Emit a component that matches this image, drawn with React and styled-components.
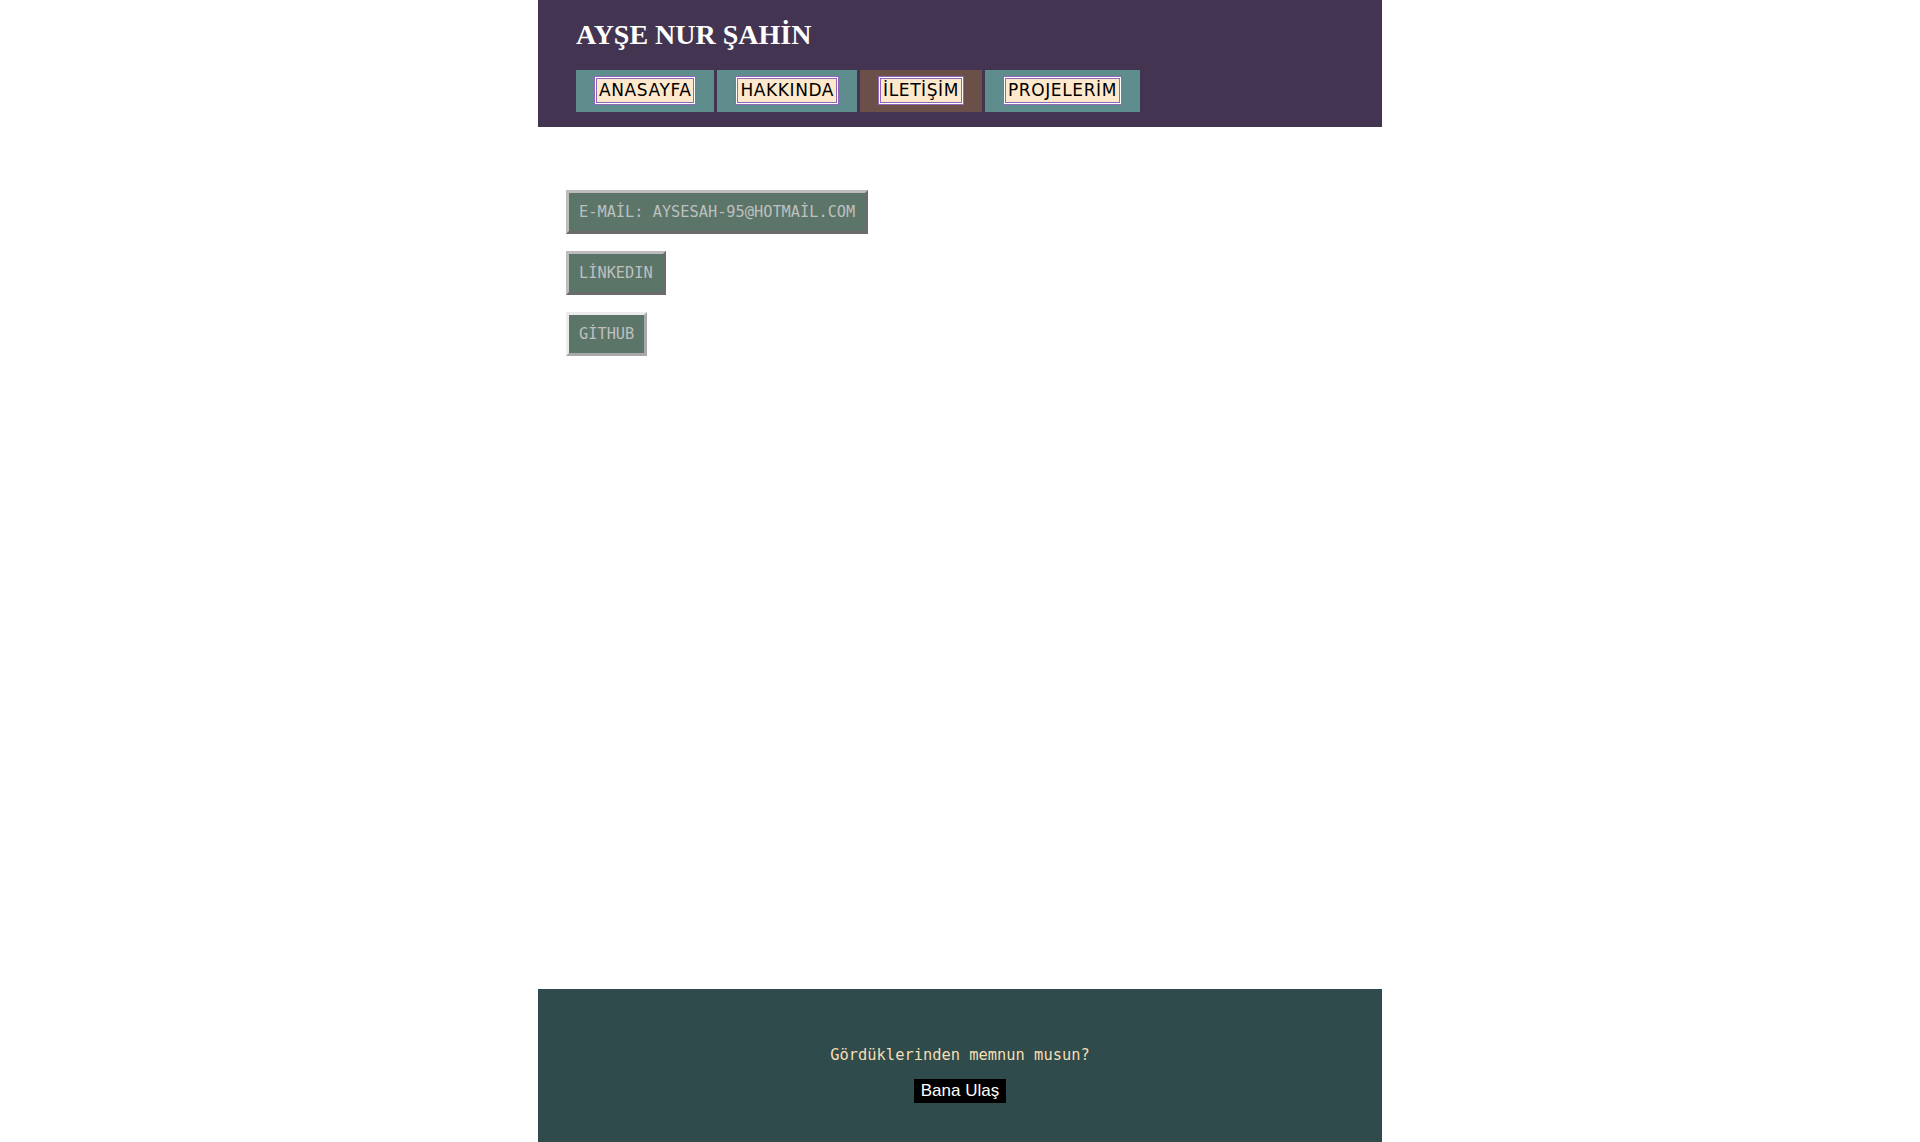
import styled, { createGlobalStyle } from "styled-components";

const GlobalStyle = createGlobalStyle`
  body {
    margin: 0;
    background: #ffffff;
    font-family: "Liberation Serif", serif;
  }
`;

const Page = styled.div`
  width: 844px;
  margin: 0 auto;
  min-height: 1142px;
  display: flex;
  flex-direction: column;
`;

const Header = styled.header`
  background: #433551;
  padding: 19px 38px 15px;
`;

const Title = styled.h1`
  margin: 0 0 19px;
  font-family: "Liberation Serif", serif;
  font-size: 28px;
  font-weight: 700;
  line-height: 32px;
  color: #ffffff;
`;

const Nav = styled.ul`
  list-style: none;
  margin: 0;
  padding: 0;
  display: flex;
  gap: 3px;
`;

const NavItem = styled.li`
  background: ${(p) => (p.$active ? "#6a5049" : "#5f8c8c")};
  padding: 6px 18px 7px;
  display: flex;
  align-items: center;
`;

const NavLink = styled.a`
  display: block;
  background: #ffe9cc;
  border: 1px solid #9067b8;
  box-shadow: inset 0 0 0 1px #ffffff, inset 0 0 0 2px #9067b8;
  padding: 3px 4px;
  font-family: "Comic Sans MS", "DejaVu Sans", sans-serif;
  font-size: 17px;
  letter-spacing: 0.6px;
  line-height: 21px;
  color: #000000;
  text-decoration: none;
`;

const Main = styled.main`
  flex: 1;
  padding: 63px 28px;
  display: flex;
  flex-direction: column;
  align-items: flex-start;
  gap: 17px;
`;

const ContactButton = styled.a`
  display: block;
  background: #5b7669;
  border: 3px solid;
  border-color: ${(p) =>
    p.$light ? "#ececec #a8a8a8 #a8a8a8 #ececec" : "#bdbdbd #6b6b6b #6b6b6b #bdbdbd"};
  padding: 10px 10px;
  font-family: "DejaVu Sans Mono", monospace;
  font-size: 15.3px;
  line-height: 18px;
  color: #bfbfbf;
  text-decoration: none;
`;

const Footer = styled.footer`
  background: #2f4b4b;
  height: 153px;
  padding-top: 57px;
  box-sizing: border-box;
  display: flex;
  flex-direction: column;
  align-items: center;
`;

const FooterText = styled.p`
  margin: 0 0 15px;
  font-family: "DejaVu Sans Mono", monospace;
  font-size: 15.4px;
  line-height: 18px;
  color: #f5deb3;
`;

const ContactLink = styled.a`
  background: #000000;
  color: #ffffff;
  padding: 2px 7px;
  font-family: "Liberation Sans", Arial, sans-serif;
  font-size: 17px;
  line-height: 20px;
  text-decoration: none;
`;

const pages = ["ANASAYFA", "HAKKINDA", "İLETİŞİM", "PROJELERİM"];

const contacts = [
  { label: "E-MAİL: AYSESAH-95@HOTMAİL.COM" },
  { label: "LİNKEDIN" },
  { label: "GİTHUB", light: true },
];

function App() {
  return (
    <>
      <GlobalStyle />
      <Page>
        <Header>
          <Title>AYŞE NUR ŞAHİN</Title>
          <Nav>
            {pages.map((page) => (
              <NavItem key={page} $active={page === "İLETİŞİM"}>
                <NavLink href="#">{page}</NavLink>
              </NavItem>
            ))}
          </Nav>
        </Header>
        <Main>
          {contacts.map((c) => (
            <ContactButton key={c.label} href="#" $light={c.light}>
              {c.label}
            </ContactButton>
          ))}
        </Main>
        <Footer>
          <FooterText>Gördüklerinden memnun musun?</FooterText>
          <ContactLink href="#">Bana Ulaş</ContactLink>
        </Footer>
      </Page>
    </>
  );
}

export default App;
